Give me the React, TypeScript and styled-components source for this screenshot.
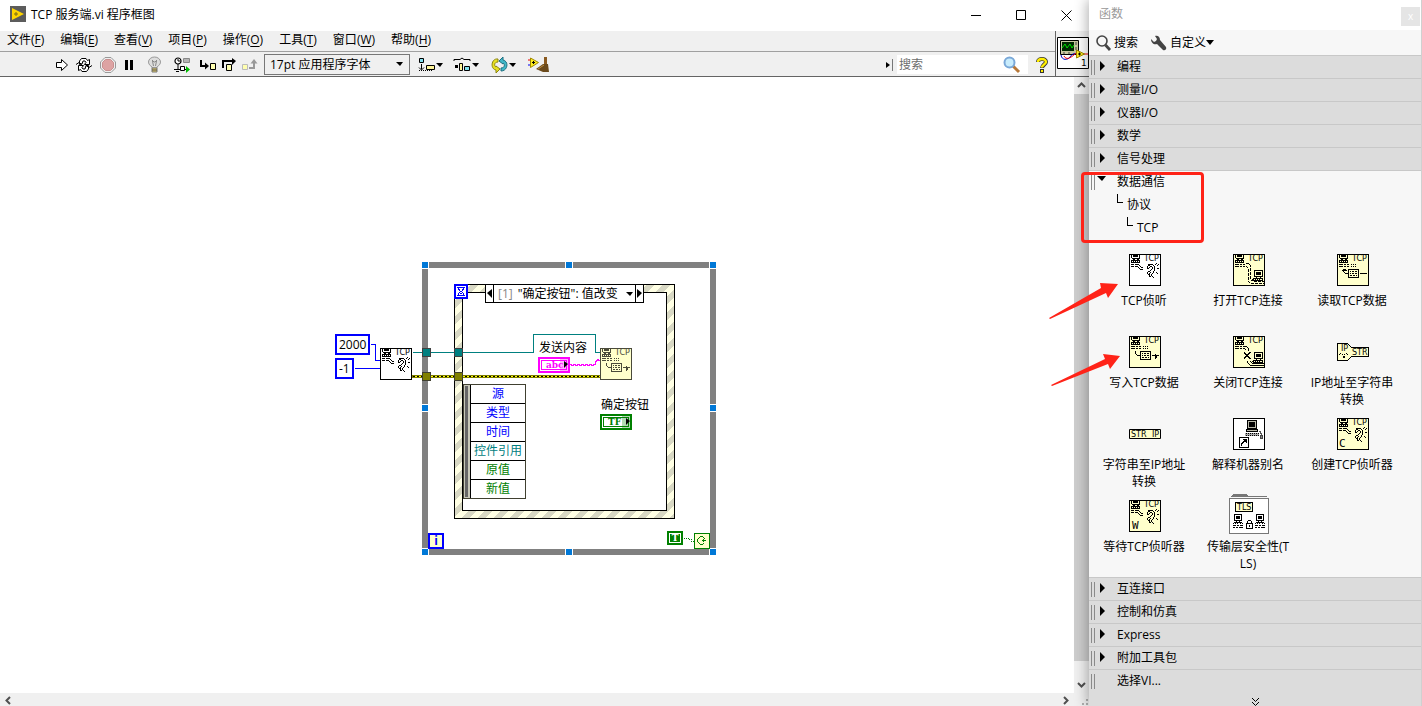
import React from 'react';
import styled, { createGlobalStyle } from 'styled-components';

const FONT = '"Open Sans", "Noto Sans CJK SC", sans-serif';

const GlobalStyle = createGlobalStyle`
  *, *::before, *::after { box-sizing: border-box; }
  body { margin: 0; background: #fff; font: 12px/17px ${FONT}; color: #000; }
  button, input, select { font: inherit; color: inherit; margin: 0; padding: 0; border: 0; background: none; }
  button { cursor: default; }
  svg { display: block; flex: none; overflow: visible; }
`;

/* ---------- pixel drawings ---------- */

function Bitmap({ x = 0, y = 0, rows, fill = '#000' }: { x?: number; y?: number; rows: string[]; fill?: string }) {
  let d = '';
  rows.forEach((row, r) => {
    for (const m of row.matchAll(/#+/g)) {
      d += `M${x + (m.index ?? 0)} ${y + r}h${m[0].length}v1h-${m[0].length}z`;
    }
  });
  return <path d={d} fill={fill} />;
}

function Lines({ d, color = '#000', dash }: { d: string; color?: string; dash?: string }) {
  return <path transform="translate(.5 .5)" d={d} fill="none" stroke={color} strokeDasharray={dash} />;
}

const HOST = ['.#.#####.#', '.#.#####.#', '.#.......#', '..########', '...##..##.', '.#########', '.#.#.#.#.#', '.#########'];
const HOST_LARGE = [
  '..#########', '..#.......#', '..#.#####.#', '..#.#####.#', '..#.#####.#', '..#.......#',
  '..#########', '....#...#..', '.##########', '##.#.#.#..#', '.##########',
];
const CABLE_LEAD = ['####.##.##', '..........', '####.##.##'];
const CABLE = ['###.####....', '........#...', '###.###..#..', '.......#..##', '........#...', '.........###'];
const EAR = [
  '...####...', '..#....#..', '.#..##..#.', '.#.#..#.#.', '.##...#.#.', '.....#..#.', '....#...#.',
  '..##...#..', '.#..#..#..', '.#.#..#...', '..##.#....', '...#.#....', '...##.....',
];
const EAR_WAVES = [
  '.........#..', '.#......#..#', '..#.......#.', '............', '............', '..........##', '............',
  '............', '............', '.........#..', '..........#.', '............', '............', '.....#......', '......#.....',
];
const PACKET = [
  '.###########', '.#.........#', '.#.#.##.##.#', '.#.........#', '.#.#.##.##.#', '.#.........#',
  '.#.##.##.#.#', '.#.........#', '.###########',
];
const CROSS = ['#....##', '##..##.', '.####..', '..##...', '.####..', '##..##.', '#....##'];

type Kind = 'listen' | 'open' | 'read' | 'write' | 'close' | 'create' | 'wait';

function TcpIcon({ kind, bg = '#ffffcc', ink = '#000' }: { kind: Kind; bg?: string; ink?: string }) {
  const ear = kind === 'listen' || kind === 'create' || kind === 'wait';
  return (
    <svg width="32" height="32" viewBox="0 0 32 32" shapeRendering="crispEdges" aria-hidden="true">
      <rect width="32" height="32" fill={ink} />
      <rect x="1" y="1" width="30" height="30" fill={bg} />
      <Bitmap x={1} y={1} rows={HOST} fill={ink} />
      <text x="15" y="7" fontFamily="DejaVu Sans, sans-serif" fontSize="8" fill={ink}>TCP</text>
      {ear && (
        <>
          <Bitmap x={2} y={10} rows={CABLE} fill={ink} />
          <Bitmap x={17} y={10} rows={EAR} fill={ink} />
          <Bitmap x={18} y={9} rows={EAR_WAVES} fill={ink} />
        </>
      )}
      {kind === 'create' && <text x="2" y="29" fontFamily="DejaVu Sans Mono, monospace" fontSize="11">C</text>}
      {kind === 'wait' && <text x="3" y="29" fontFamily="DejaVu Sans Mono, monospace" fontSize="11">W</text>}
      {kind === 'open' && (
        <>
          <Bitmap x={2} y={10} rows={CABLE_LEAD} />
          <Lines d="M12 9h3l2 2v14l3 2h10" dash="3 1" />
          <Lines d="M12 12h1l2 2v13l3 2h12" dash="3 1" />
          <Bitmap x={19} y={16} rows={HOST_LARGE} />
        </>
      )}
      {kind === 'close' && (
        <>
          <Bitmap x={2} y={10} rows={CABLE_LEAD} />
          <Lines d="M11 10h2l2 2v2M11 12l2 2M14 24v2l3 3h13M17 25l2 2h11" />
          <Bitmap x={11} y={16} rows={CROSS} />
          <Bitmap x={19} y={16} rows={HOST_LARGE} />
        </>
      )}
      {kind === 'read' && (
        <>
          <Bitmap x={2} y={10} rows={CABLE_LEAD} />
          <Lines d="M13 10h6M13 12h6" dash="1 1" />
          <Lines d="M6 14v3l2 2h3M4 16h5M5 15h3M22 19h7" />
          <Bitmap x={10} y={15} rows={PACKET} />
        </>
      )}
      {kind === 'write' && (
        <>
          <Bitmap x={2} y={10} rows={CABLE_LEAD} fill={ink} />
          <Lines color={ink} d="M13 10h6M13 12h6" dash="1 1" />
          <Lines color={ink} d="M6 14v3l2 2h3M22 19h7M26 17v5M27 18v3" />
          <Bitmap x={10} y={15} rows={PACKET} fill={ink} />
        </>
      )}
    </svg>
  );
}

const tiny = { fontFamily: 'DejaVu Sans, sans-serif', fontSize: 8 };

const IpToString = () => (
  <svg width="32" height="18" viewBox="0 0 32 18" shapeRendering="crispEdges" aria-hidden="true">
    <path d="M.5.5h10l4 4h17v9h-17l-4 4H.5z" fill="#ffffcc" stroke="#000" />
    <text x="4" y="8" {...tiny}>IP</text>
    <text x="15" y="12" {...tiny}>STR</text>
    <Bitmap x={2} y={10} rows={['.#.....#.', '#..#.#..#', '.........', '....##...', '....##...']} />
  </svg>
);

const StringToIp = () => (
  <svg width="32" height="10" viewBox="0 0 32 10" aria-hidden="true">
    <path d="M.5.5h31v9H.5z" fill="#ffffcc" stroke="#000" />
    <text x="2" y="8" {...tiny}>STR</text>
    <text x="23" y="8" {...tiny}>IP</text>
  </svg>
);

const MachineAlias = () => (
  <svg width="32" height="32" viewBox="0 0 32 32" shapeRendering="crispEdges" aria-hidden="true">
    <path d="M.5.5h31v31H.5z" fill="#fff" stroke="#000" />
    <path d="M14.500 2.500h9v8h-9z" fill="#b8b8a8" stroke="#000" />
    <path d="M16 4h6v5h-6z" />
    <path d="M13.500 11.500h11v2h-11z" fill="#b8b8a8" stroke="#000" />
    <path d="M12 15h14v3H12z" fill="#aaa" />
    <Lines d="M12 15h14M12 17h14" dash="1 1" />
    <Lines color="#555" d="M25 13h2v2h1v3" />
    <path d="M27.500 17.500h2v3h-2z" fill="#888" stroke="#444" />
    <path d="M6.500 19.500h9v10h-9z" fill="#fff" stroke="#000" />
    <Bitmap x={8} y={21} rows={['..####', '...###', '..####', '.##..#', '##....', '#.....', '#.....']} />
  </svg>
);

const TlsFolder = () => (
  <svg width="40" height="44" viewBox="0 0 40 44" shapeRendering="crispEdges" aria-hidden="true">
    <path d="M2 2l2-2h13l2 2h19v1H2z" fill="#777" />
    <path d="M.5 4.500h39v35H.5z" fill="#fff" stroke="#777" />
    <path d="M6.500 8.500h17v9h-17z" fill="#ffffcc" stroke="#000" />
    <text x="8" y="16" {...tiny}>TLS</text>
    {[4, 26].map((x) => (
      <Bitmap key={x} x={x} y={20} rows={['.########.', '.#......#.', '.#.####.#.', '.#.####.#.', '.#.####.#.', '.#......#.', '.########.', '...#..#...', '.########.', '#.#.#..#.#', '..........', '###.##.###', '..........', '##.##.####']} />
    ))}
    <Bitmap x={17} y={26} rows={['..###..', '.#...#.', '.#...#.', '#######', '#.....#', '#..#..#', '#..#..#', '#.....#', '#######']} />
  </svg>
);

const Triangle = ({ dir = 'down', size = 7 }: { dir?: 'down' | 'right' | 'left'; size?: number }) => {
  const h = Math.ceil(size / 2);
  const d = dir === 'down' ? `M0 0h${size + 1}l-${h} ${h + 1}z` : dir === 'right' ? `M0 0v${size + 2}l${h + 1} -${h + 1}z` : `M${h + 1} 0v${size + 2}l-${h + 1} -${h + 1}z`;
  return (
    <svg width={dir === 'down' ? size + 1 : h + 1} height={dir === 'down' ? h + 1 : size + 2} aria-hidden="true">
      <path d={d} />
    </svg>
  );
};

const Chevron = ({ turn }: { turn: number }) => (
  <svg width="9" height="9" viewBox="0 0 9 9" aria-hidden="true">
    <path d="M1 6l3.500-3.500L8 6" transform={`rotate(${turn} 4.500 4.500)`} fill="none" stroke="#505050" strokeWidth="2" />
  </svg>
);

/* ---------- window frame ---------- */

const Desktop = styled.div`
  display: flex;
  min-height: 100vh;
`;

const MainWindow = styled.main`
  flex: 1;
  min-width: 0;
  display: flex;
  flex-direction: column;
  background: #fff;
`;

const TitleBar = styled.header`
  display: flex;
  align-items: flex-start;
  height: 31px;
  padding-left: 10px;
`;

const AppLogo = styled.svg`
  margin-top: 6px;
`;

const Title = styled.h1`
  flex: 1;
  margin: 6px 0 0 5px;
  font-size: 12px;
  line-height: 17px;
  font-weight: 400;
`;

const WindowButton = styled.button`
  width: 45px;
  height: 30px;
  display: grid;
  place-items: center;
`;

const Chrome = styled.div`
  display: flex;
  height: 46px;
  background: #f0f0f0;
  border-bottom: 1px solid #646464;
`;

const Bars = styled.div`
  flex: 1;
  min-width: 0;
`;

const MenuBar = styled.nav`
  display: flex;
  align-items: flex-start;
  gap: 16px;
  height: 21px;
  padding-left: 7px;
  border-bottom: 1px solid #a0a0a0;
`;

const MenuItem = styled.button`
  line-height: 17px;
  white-space: nowrap;
  u { text-underline-offset: 2px; }
`;

const ToolBar = styled.div`
  display: flex;
  align-items: center;
  height: 24px;
  padding: 1px 0 0 56px;
`;

const ToolButton = styled.button<{ $w: number }>`
  width: ${(p) => p.$w}px;
  height: 22px;
  display: flex;
  align-items: center;
  gap: 1px;
`;

const FontPicker = styled.label`
  position: relative;
  width: 146px;
  height: 21px;
  margin-right: 9px;
  select {
    display: block;
    width: 100%;
    height: 100%;
    padding-left: 5px;
    appearance: none;
    border: 1px solid #777;
    border-radius: 0;
  }
  svg {
    position: absolute;
    right: 7px;
    top: 8px;
    pointer-events: none;
  }
`;

const SearchArea = styled.div`
  display: flex;
  align-items: center;
  margin-left: auto;
  padding-right: 6px;
`;

const SearchBox = styled.label`
  display: flex;
  align-items: center;
  width: 131px;
  height: 19px;
  margin: 0 8px 0 4px;
  padding-right: 7px;
  background: #fff;
  input { flex: 1; min-width: 0; height: 19px; padding-left: 2px; outline: 0; }
  input::placeholder { color: #6d6d6d; opacity: 1; }
`;

const ViIconPane = styled.div`
  width: 34px;
  border-left: 1px solid #646464;
  padding: 6px 0 0 1px;
`;

const Workspace = styled.div`
  flex: 1;
  display: flex;
  min-height: 0;
`;

const Canvas = styled.section`
  flex: 1;
  min-width: 0;
  overflow: hidden;
  background: #fff;
`;

const ScrollBar = styled.div<{ $horizontal?: boolean }>`
  display: flex;
  flex-direction: ${(p) => (p.$horizontal ? 'row' : 'column')};
  justify-content: space-between;
  background: #f0f0f0;
  ${(p) => (p.$horizontal ? 'height: 13px; padding: 1px 16px 0 1px;' : 'width: 15px;')}
`;

const ScrollButton = styled.button`
  width: 15px;
  height: 17px;
  display: grid;
  place-items: center;
`;

const ScrollThumb = styled.div`
  flex: 1;
  margin-bottom: 15px;
  background: #cdcdcd;
`;

const BottomBar = styled.div`
  position: relative;
  button { height: 13px; }
`;

const Grip = styled.svg`
  position: absolute;
  right: 0;
  bottom: 0;
`;

/* ---------- block diagram ---------- */

const Diagram = styled.div`
  position: relative;
  width: 390px;
  height: 300px;
  margin: 180px 0 0 330px;
  white-space: nowrap;
`;

const Wiring = styled.svg`
  position: absolute;
  inset: 0;
`;

const Node = styled.div<{ $x: number; $y: number }>`
  position: absolute;
  left: ${(p) => p.$x}px;
  top: ${(p) => p.$y}px;
`;

const NumberConstant = styled(Node)`
  height: 21px;
  padding: 0 2px;
  border: 2px solid #00f;
  background: #fff;
`;

const CaseSelector = styled(Node)`
  display: flex;
  width: 159px;
  height: 19px;
  border: 1px solid #000;
  background: #fff;
  line-height: 17px;
`;

const CaseStep = styled.button`
  width: 8px;
  display: grid;
  place-items: center;
  &:first-child { border-right: 1px solid #000; }
  &:last-child { border-left: 1px solid #000; }
`;

const CaseName = styled.button`
  flex: 1;
  display: flex;
  align-items: center;
  justify-content: space-between;
  padding: 0 2px 0 4px;
  line-height: 17px;
  span { color: #888; margin-right: 2px; }
`;

const EventData = styled(Node)`
  display: flex;
  width: 63px;
  border: 1px solid #404030;
  background: #fff;
`;

const EventHandle = styled.div`
  width: 7px;
  background: #c8c8b8;
  border-left: 1px solid #c8c8b8;
  border-right: 1px solid #000;
  padding: 1px 1px 1px 0;
  &::before { content: ''; display: block; width: 3px; height: 100%; background: #666; }
`;

const EventFields = styled.ul`
  flex: 1;
  margin: 0;
  padding: 0;
  list-style: none;
  text-align: center;
`;

const EventField = styled.li<{ $color: string }>`
  height: 19px;
  line-height: 18px;
  color: ${(p) => p.$color};
  & + & { border-top: 1px solid #000; }
  &:first-child { height: 18px; }
`;

const ControlTerminal = styled(Node)<{ $color: string }>`
  width: 32px;
  height: 16px;
  border: 2px solid ${(p) => p.$color};
  padding: 1px;
  background: #fff;
  color: ${(p) => p.$color};
  font: bold 9px/8px "DejaVu Serif", serif;
  span { display: block; height: 10px; padding-left: 4px; border: 1px solid currentColor; }
  svg { position: absolute; right: 0; top: 2px; z-index: 1; }
  &::after { content: ''; position: absolute; right: 0; top: 0; width: 8px; height: 12px; background: currentColor; opacity: 0.3; }
`;

const IterationTerminal = styled(Node)`
  width: 16px;
  height: 16px;
  border: 2px solid #00f;
  background: #ffffcc;
  color: #00f;
  font-weight: 700;
  line-height: 12px;
  text-align: center;
`;

const TrueConstant = styled(Node)`
  width: 16px;
  height: 14px;
  border: 2px solid #008000;
  padding: 1px;
  color: #fff;
  font: bold 9px/8px "DejaVu Serif", serif;
  text-align: center;
  background: #fff;
  span { display: block; background: #008000; height: 8px; }
`;

const TEAL = '#008080';
const GREEN = '#008000';
const BLUE = '#0000ff';

function BlockDiagram() {
  const handles = [[92, 5], [236, 5], [380, 5], [92, 148], [380, 148], [92, 292], [236, 292], [380, 292]];
  return (
    <Diagram>
      <Wiring width="390" height="300" viewBox="0 0 390 300" shapeRendering="crispEdges" aria-hidden="true">
        <defs>
          <pattern id="hatch" width="16" height="16" patternUnits="userSpaceOnUse">
            <rect width="16" height="16" fill="#ffffe4" />
            <path d="M0 8L8 0h8L0 16z M16 8v8h-8z" fill="#d8d8c4" />
          </pattern>
        </defs>
        <path d="M95 8h288v287H95z" fill="none" stroke="#808080" strokeWidth="6" />
        {handles.map(([x, y]) => (
          <g key={`${x}-${y}`}>
            <rect x={x - 1} y={y - 1} width="8" height="8" fill="#fff" />
            <rect x={x} y={y} width="6" height="6" fill="#0078d7" />
          </g>
        ))}
        <path d="M124.500 27.500h220v234h-220z" fill="url(#hatch)" stroke="#000" />
        <path d="M132.500 35.500h204v218h-204z" fill="#fff" stroke="#000" />
        <Lines color={BLUE} d="M40 87h5v16h5M24 111h26" />
        <Lines color={TEAL} d="M82 95h121v-18h62v18h5" />
        <path d="M82 118h188v3H82z" fill="#808000" />
        <Lines color="#ffff00" d="M82 119h188" />
        <Lines color="#000" d="M82 119h188" dash="2 2" />
        <path d="M92.500 91.500h8v8h-8zM124.500 91.500h8v8h-8z" fill={TEAL} stroke="#404040" />
        <path d="M92.500 115.500h8v8h-8zM124.500 115.500h8v8h-8z" fill="#808000" stroke="#404030" />
        <Lines color="#ff00ff" d="M240 107l2 1 2-1 2 1 2-1 2 1 2-1 2 1 2-1 2 1 2-1 2 1 2-1h1v-3l2-1v-1l2 1h1" />
        <Lines color={GREEN} d="M353 281h6v1h2v2h4" dash="1 1" />
        <path d="M364.500 276.500h15v15h-15z" fill="#ffffcc" stroke={GREEN} />
        <Bitmap x={367} y={279} fill={GREEN} rows={['...###...', '..#...#..', '.#.....#.', '#.....#..', '#....####', '#.....#..', '.#.......', '..#...#..', '...###...']} />
        <path d="M124 27h14v15h-14z" fill={BLUE} />
        <path d="M126 29h10v11h-10z" fill="#fff" />
        <Bitmap x={127} y={30} fill={BLUE} rows={['########', '.#....#.', '.##..##.', '..#..#..', '...##...', '..#..#..', '.#.##.#.', '.#....#.', '########']} />
      </Wiring>

      <NumberConstant $x={5} $y={77}>2000</NumberConstant>
      <NumberConstant $x={5} $y={101}>-1</NumberConstant>
      <Node $x={50} $y={91}><TcpIcon kind="listen" bg="#fff" /></Node>

      <CaseSelector $x={155} $y={27}>
        <CaseStep aria-label="上一个分支"><Triangle dir="left" size={7} /></CaseStep>
        <CaseName><div><span>[1]</span> "确定按钮": 值改变</div><Triangle size={6} /></CaseName>
        <CaseStep aria-label="下一个分支"><Triangle dir="right" size={7} /></CaseStep>
      </CaseSelector>

      <Node $x={209} $y={82}>发送内容</Node>
      <ControlTerminal $x={208} $y={100} $color="#ff00ff"><span>abc</span><Triangle dir="right" size={5} /></ControlTerminal>
      <Node $x={270} $y={91}><TcpIcon kind="write" ink="#4a4a3a" /></Node>
      <Node $x={271} $y={139}>确定按钮</Node>
      <ControlTerminal $x={270} $y={157} $color={GREEN}><span>TF</span><Triangle dir="right" size={5} /></ControlTerminal>

      <EventData $x={133} $y={127}>
        <EventHandle />
        <EventFields>
          <EventField $color={BLUE}>源</EventField>
          <EventField $color={BLUE}>类型</EventField>
          <EventField $color={BLUE}>时间</EventField>
          <EventField $color={TEAL}>控件引用</EventField>
          <EventField $color={GREEN}>原值</EventField>
          <EventField $color={GREEN}>新值</EventField>
        </EventFields>
      </EventData>

      <IterationTerminal $x={98} $y={276}>i</IterationTerminal>
      <TrueConstant $x={337} $y={274}><span>T</span></TrueConstant>
    </Diagram>
  );
}

/* ---------- functions palette ---------- */

const Palette = styled.aside`
  position: relative;
  z-index: 1;
  flex: 0 0 333px;
  display: flex;
  flex-direction: column;
  background: #dcdcdc;
  border-right: 1px solid #d0d0d0;
  box-shadow: -2px 0 12px rgba(0, 0, 0, 0.3);
`;

const PaletteTitle = styled.header`
  display: flex;
  justify-content: space-between;
  height: 30px;
  padding: 5px 1px 0 10px;
  background: #fff;
  color: #999;
`;

const PaletteClose = styled.button`
  width: 19px;
  height: 19px;
  margin-top: 2px;
  background: #e5e5e5;
  color: #fff;
  font-size: 10px;
  line-height: 17px;
`;

const PaletteTools = styled.div`
  display: flex;
  align-items: center;
  gap: 13px;
  height: 25px;
  padding-left: 7px;
  background: #f7f7f7;
`;

const PaletteTool = styled.button`
  display: flex;
  align-items: center;
  gap: 3px;
`;

const CustomizeTool = styled(PaletteTool)`
  gap: 0;
  svg:first-child { margin-right: 3px; }
`;

const Category = styled.button<{ $open?: boolean }>`
  display: flex;
  align-items: center;
  width: 100%;
  height: 23px;
  padding-left: 2px;
  border-top: 1px solid #c8c8c8;
  background: ${(p) => (p.$open ? '#f7f7f7' : '#dcdcdc')};
  text-align: left;
`;

const CategoryGrip = styled.span`
  width: 4px;
  height: 15px;
  border: solid #8a8a8a;
  border-width: 0 1px;
`;

const CategoryMark = styled.span<{ $open?: boolean }>`
  width: 22px;
  height: 15px;
  padding: ${(p) => (p.$open ? '1px 0 0 2px' : '1px 0 0 5px')};
`;

const CategoryName = styled.span`
  height: 19px;
  line-height: 17px;
`;

const OpenCategory = styled.section`
  position: relative;
  background: #f7f7f7;
  padding-bottom: 5px;
`;

const SubLevel = styled.div<{ $depth: number }>`
  display: flex;
  gap: 4px;
  height: 23px;
  padding: 3px 0 0 ${(p) => 18 + p.$depth * 10}px;
  &::before { content: ''; width: 6px; height: 9px; margin-top: -2px; border: solid #000; border-width: 0 0 1px 1px; }
`;

const FunctionGrid = styled.div`
  display: grid;
  grid-template-columns: repeat(3, 104px);
  row-gap: 10px;
  padding: 15px 0 0 4px;
`;

const FunctionItem = styled.button`
  display: flex;
  flex-direction: column;
  align-items: center;
  gap: 6px;
  height: 72px;
`;

const FunctionIcon = styled.span`
  display: flex;
  align-items: center;
  justify-content: center;
  width: 32px;
  height: 32px;
`;

const FunctionLabel = styled.span`
  width: 88px;
  padding-right: 2px;
  line-height: 17px;
  text-align: center;
  word-break: break-all;
`;

const PaletteMore = styled.button`
  flex: 1;
  min-height: 14px;
  display: flex;
  justify-content: center;
  align-items: flex-end;
`;

const Highlight = styled.div`
  position: absolute;
  left: -8px;
  top: 2px;
  width: 123px;
  height: 71px;
  border: 3px solid #ff2318;
  border-radius: 4px;
  pointer-events: none;
`;

const PointerArrow = styled.svg<{ $top: number }>`
  position: absolute;
  left: -41px;
  top: ${(p) => p.$top}px;
  pointer-events: none;
`;

const POINTERS = [
  { top: 112, d: 'M1 36L53 6 52 1 70 2 60 16 58 11 2 37z' },
  { top: 183, d: 'M3 32L57 6 55 1 72 3 62 16 60 11 4 33z' },
];

function CategoryRow({ name, open, leaf }: { name: string; open?: boolean; leaf?: boolean }) {
  return (
    <Category $open={open} aria-expanded={leaf ? undefined : !!open}>
      <CategoryGrip />
      <CategoryMark $open={open}>{!leaf && <Triangle dir={open ? 'down' : 'right'} size={open ? 8 : 8} />}</CategoryMark>
      <CategoryName>{name}</CategoryName>
    </Category>
  );
}

const FUNCTIONS: { name: string; icon: React.ReactNode }[] = [
  { name: 'TCP侦听', icon: <TcpIcon kind="listen" bg="#fff" /> },
  { name: '打开TCP连接', icon: <TcpIcon kind="open" /> },
  { name: '读取TCP数据', icon: <TcpIcon kind="read" /> },
  { name: '写入TCP数据', icon: <TcpIcon kind="write" /> },
  { name: '关闭TCP连接', icon: <TcpIcon kind="close" /> },
  { name: 'IP地址至字符串转换', icon: <IpToString /> },
  { name: '字符串至IP地址转换', icon: <StringToIp /> },
  { name: '解释机器别名', icon: <MachineAlias /> },
  { name: '创建TCP侦听器', icon: <TcpIcon kind="create" /> },
  { name: '等待TCP侦听器', icon: <TcpIcon kind="wait" /> },
  { name: '传输层安全性(TLS)', icon: <TlsFolder /> },
];

function FunctionsPalette() {
  return (
    <Palette>
      <PaletteTitle>
        函数
        <PaletteClose aria-label="关闭">x</PaletteClose>
      </PaletteTitle>
      <PaletteTools>
        <PaletteTool>
          <svg width="15" height="16" viewBox="0 0 15 16" aria-hidden="true">
            <circle cx="6" cy="6" r="5" fill="none" stroke="#444" strokeWidth="1.600" />
            <path d="M9.500 10l4.500 5" stroke="#444" strokeWidth="2.800" />
          </svg>
          搜索
        </PaletteTool>
        <CustomizeTool>
          <svg width="16" height="16" viewBox="0 0 16 16" aria-hidden="true">
            <path d="M4 1C7 0 9 2 9 5l6 7c1 2-1 4-3 3L6 9C3 10 0 8 0 4l3 3 2-1 1-2z" fill="#444" />
          </svg>
          自定义
          <Triangle size={7} />
        </CustomizeTool>
      </PaletteTools>
      {['编程', '测量I/O', '仪器I/O', '数学', '信号处理'].map((n) => <CategoryRow key={n} name={n} />)}
      <OpenCategory>
        <CategoryRow name="数据通信" open />
        <SubLevel $depth={1}>协议</SubLevel>
        <SubLevel $depth={2}>TCP</SubLevel>
        <FunctionGrid>
          {FUNCTIONS.map((f) => (
            <FunctionItem key={f.name}>
              <FunctionIcon>{f.icon}</FunctionIcon>
              <FunctionLabel>{f.name}</FunctionLabel>
            </FunctionItem>
          ))}
        </FunctionGrid>
        <Highlight />
        {POINTERS.map((p) => (
          <PointerArrow key={p.top} $top={p.top} width="74" height="38" viewBox="0 0 74 38" aria-hidden="true">
            <path d={p.d} fill="#ff2318" />
          </PointerArrow>
        ))}
      </OpenCategory>
      {['互连接口', '控制和仿真', 'Express', '附加工具包'].map((n) => <CategoryRow key={n} name={n} />)}
      <CategoryRow name="选择VI..." leaf />
      <PaletteMore aria-label="更多">
        <svg width="9" height="8" viewBox="0 0 9 8" aria-hidden="true">
          <path d="M1 0l3.500 3.500L8 0M1 4l3.500 3.500L8 4" fill="none" stroke="#000" />
        </svg>
      </PaletteMore>
    </Palette>
  );
}

/* ---------- toolbar icons ---------- */

const RunIcon = () => (
  <svg width="12" height="14" viewBox="0 0 12 14"><path d="M.5 4.500h5v-3l6 5.500-6 5.500v-3h-5z" fill="#fff" stroke="#000" /></svg>
);
const RunLoopIcon = () => (
  <svg width="16" height="14" viewBox="0 0 16 14">
    <path d="M3.500 6.500V3l2-2.500H10l1.500 2 2-1v5H8.500l1.500-2-1-1.500H7l-1 3z" fill="#fff" stroke="#000" />
    <path d="M12.500 7.500V11l-2 2.500H6l-1.500-2-2 1v-5h5L6 9.500 7 11h2l1-3.500z" fill="#fff" stroke="#000" />
    <path d="M0 6.500l3-2 3 2M16 7.500l-3 2-3-2" stroke="#000" fill="none" />
  </svg>
);
const AbortIcon = () => (
  <svg width="16" height="16" viewBox="0 0 16 16">
    <path d="M5 .5h6L15.500 5v6L11 15.500H5L.5 11V5z" fill="#eee" stroke="#999" />
    <path d="M5.500 2.500h5l3 3v5l-3 3h-5l-3-3v-5z" fill="#dda3a3" stroke="#c98f8f" />
  </svg>
);
const PauseIcon = () => (
  <svg width="10" height="12" viewBox="0 0 10 12"><path d="M1 1h3v10H1zM6 1h3v10H6z" /></svg>
);
const BulbIcon = () => (
  <svg width="13" height="16" viewBox="0 0 13 16">
    <path d="M4 10C1 8 .5 6 .5 5A6 5 0 0 1 12.500 5c0 1-.5 3-3.500 5v1H4z" fill="#ddd" stroke="#999" />
    <path d="M4.500 4l1 5M8.500 4l-1 5M4 3l2 2h1l2-2" stroke="#888" fill="none" />
    <path d="M4 11h5v4H4z" fill="#e0c860" stroke="#777" />
    <path d="M4 13h5" stroke="#555" />
  </svg>
);
const RetainIcon = () => (
  <svg width="17" height="16" viewBox="0 0 17 16">
    <circle cx="4" cy="4" r="3" fill="#fff" stroke="#000" strokeWidth="1.200" />
    <path d="M4 2v2h2M4 7v5" stroke="#000" fill="none" />
    <path d="M9.500 1.500h6v4h-6z" fill="#b4b4b4" stroke="#888" />
    <path d="M0 12.500h6" stroke="#000" />
    <path d="M6.500 9.500h4v4h-4z" fill="#fff" stroke="#000" />
    <path d="M2 14.500h3M10 12.500h3" stroke="#000" />
    <path d="M12 9l4 3.500-4 3.500z" fill="#0b0" />
  </svg>
);
const StepIntoIcon = () => (
  <svg width="16" height="12" viewBox="0 0 16 12">
    <path d="M1 1v6h6" fill="none" stroke="#000" strokeWidth="2" /><path d="M5 3.500l4 3.500-4 3.500z" />
    <path d="M10.500 4.500h5v6h-5z" fill="#ffffb0" stroke="#000" />
  </svg>
);
const StepOverIcon = () => (
  <svg width="14" height="13" viewBox="0 0 14 13">
    <path d="M1 10V3h10" fill="none" stroke="#000" strokeWidth="2" /><path d="M10 0l4 3-4 4z" />
    <path d="M4.500 6.500h5v6h-5z" fill="#ffffb0" stroke="#000" />
  </svg>
);
const StepOutIcon = () => (
  <svg width="15" height="12" viewBox="0 0 15 12">
    <path d="M.5 5.500h5v5h-5z" fill="#ffffb0" stroke="#bbb" />
    <path d="M7 9h5V4" fill="none" stroke="#999" strokeWidth="2" /><path d="M8.500 4.500L12 0l3.500 4.500z" fill="#999" />
  </svg>
);
const AlignIcon = () => (
  <svg width="16" height="13" viewBox="0 0 16 13">
    <path d="M.5.5h4v4h-4z" fill="#7fe0f0" stroke="#000" />
    <path d="M2.500 6v5M0 9.500l2.500 2.500L5 9.500" fill="none" stroke="#000" /><path d="M0 12.500h14" stroke="#000" strokeDasharray="1 1" />
    <path d="M7.500 7.500h8v4h-8z" fill="#fff59a" stroke="#000" />
  </svg>
);
const DistributeIcon = () => (
  <svg width="17" height="13" viewBox="0 0 17 13">
    <path d="M0 3V1.500h6l2-1.500 2 1.500h6V3" fill="none" stroke="#000" />
    <path d="M1 7h3v3H1z" /><path d="M5.500 5.500h3v7h-3z" fill="#fff59a" stroke="#000" />
    <path d="M10.500 8.500h5v4h-5z" fill="#7fe0f0" stroke="#000" />
  </svg>
);
const ReorderIcon = () => (
  <svg width="17" height="16" viewBox="0 0 17 16">
    <path d="M7 2C0 1-1 12 5 13v3l4-4-4-3v1C3 9 3 5 7 5z" fill="#e8e020" stroke="#8a8410" />
    <path d="M10 14c7 0 8-10 2-11V0L8 4l4 3V6c2 1 2 5-2 5z" fill="#40b8c8" stroke="#1d6f80" />
  </svg>
);
const CleanUpIcon = () => (
  <svg width="22" height="15" viewBox="0 0 22 15">
    <path d="M0 3h3" stroke="#e00" /><path d="M0 8h3" stroke="#00e" />
    <path d="M2.500 1l8 4.500-8 5z" fill="#ffee20" stroke="#a08800" /><path d="M4 5.500h3M5.500 4v3" stroke="#000" />
    <path d="M16 0h3v7h-3z" fill="#8a5a20" /><path d="M8 12l7-5h5l1 8h-6z" fill="#6b4a1c" /><path d="M10 12l6-4" stroke="#c09040" />
  </svg>
);
const ViIcon = () => (
  <svg width="32" height="32" viewBox="0 0 32 32" role="img" aria-label="VI 图标">
    <path d="M.5.5h31v31H.5z" fill="#fff" stroke="#000" />
    <path d="M3.500 3.500h18v14h-18z" fill="#c8c8a0" stroke="#000" />
    <path d="M5 5h12v9H5z" fill="#002800" />
    <path d="M5 11l3-4 2 4 3-4 2 4 2-3" fill="none" stroke="#0d0" />
    <path d="M19 5v3M19 10v3M6 16h2m3 0h2" stroke="#444" />
    <path d="M4 18c1 6 7 5 9 2s4-4 7-3" fill="none" stroke="#00c" /><path d="M7 19c2 4 6 3 12-3M26 17h5" fill="none" stroke="#e00" />
    <path d="M19.500 13l8 4-8 4z" fill="#ffee20" stroke="#a08800" /><path d="M21 17h3M22.500 15.500v3" stroke="#000" />
    <text x="24" y="29" fontSize="9" fontFamily="DejaVu Sans, sans-serif">1</text>
  </svg>
);

const TOOLS: { label: string; w: number; icon: React.ReactNode }[] = [
  { label: '运行', w: 20, icon: <RunIcon /> },
  { label: '连续运行', w: 24, icon: <RunLoopIcon /> },
  { label: '中止执行', w: 24, icon: <AbortIcon /> },
  { label: '暂停', w: 24, icon: <PauseIcon /> },
  { label: '高亮显示执行过程', w: 26, icon: <BulbIcon /> },
  { label: '保存连线值', w: 26, icon: <RetainIcon /> },
  { label: '单步步入', w: 22, icon: <StepIntoIcon /> },
  { label: '单步步过', w: 20, icon: <StepOverIcon /> },
  { label: '单步步出', w: 22, icon: <StepOutIcon /> },
];

const MENUS = [['文件', 'F'], ['编辑', 'E'], ['查看', 'V'], ['项目', 'P'], ['操作', 'O'], ['工具', 'T'], ['窗口', 'W'], ['帮助', 'H']];

export default function App() {
  return (
    <Desktop>
      <GlobalStyle />
      <MainWindow>
        <TitleBar>
          <AppLogo width="16" height="16" viewBox="0 0 16 16" aria-hidden="true">
            <path d="M0 0h16v16H0z" fill="#5c5c5c" />
            <path d="M2 2l12 6-12 6z" fill="#ffd500" />
            <path d="M4 8h4M6 6v4" stroke="#7a6a10" />
          </AppLogo>
          <Title>TCP 服务端.vi 程序框图</Title>
          <WindowButton aria-label="最小化"><svg width="11" height="11"><path d="M0 5.500h10" stroke="#000" /></svg></WindowButton>
          <WindowButton aria-label="最大化"><svg width="11" height="11"><path d="M.5.5h9v9h-9z" fill="none" stroke="#000" /></svg></WindowButton>
          <WindowButton aria-label="关闭"><svg width="11" height="11"><path d="M.5.5l10 10M10.500.5l-10 10" stroke="#000" /></svg></WindowButton>
        </TitleBar>
        <Chrome>
          <Bars>
            <MenuBar>
              {MENUS.map(([name, key]) => <MenuItem key={key}>{name}(<u>{key}</u>)</MenuItem>)}
            </MenuBar>
            <ToolBar>
              {TOOLS.map((t) => <ToolButton key={t.label} $w={t.w} aria-label={t.label}>{t.icon}</ToolButton>)}
              <FontPicker>
                <select aria-label="字体"><option>17pt 应用程序字体</option></select>
                <Triangle size={6} />
              </FontPicker>
              <ToolButton $w={35} aria-label="对齐对象"><AlignIcon /><Triangle size={6} /></ToolButton>
              <ToolButton $w={37} aria-label="分布对象"><DistributeIcon /><Triangle size={6} /></ToolButton>
              <ToolButton $w={37} aria-label="重新排序"><ReorderIcon /><Triangle size={6} /></ToolButton>
              <ToolButton $w={24} aria-label="整理程序框图"><CleanUpIcon /></ToolButton>
              <SearchArea>
                <svg width="7" height="12" viewBox="0 0 7 12" aria-hidden="true"><path d="M0 3l4 3-4 3z" /><path d="M6.500 0v12" stroke="#777" /></svg>
                <SearchBox>
                  <input type="text" placeholder="搜索" aria-label="搜索" />
                  <svg width="18" height="18" viewBox="0 0 18 18" aria-hidden="true">
                    <path d="M10 10l6 6" stroke="#b87838" strokeWidth="3" />
                    <circle cx="6.500" cy="6.500" r="5" fill="#c8ecfc" stroke="#7aa8d8" strokeWidth="2" />
                  </svg>
                </SearchBox>
                <ToolButton $w={13} aria-label="帮助">
                  <svg width="12" height="16" viewBox="0 0 12 16">
                    <path d="M2 5C2 1 10 1 10 5c0 2-4 3-4 6" fill="none" stroke="#333" strokeWidth="4" />
                    <path d="M4 12h4v4H4z" fill="#333" />
                    <path d="M2 5C2 1 10 1 10 5c0 2-4 3-4 5.500" fill="none" stroke="#ffee00" strokeWidth="2.400" />
                    <path d="M5 13h2v2H5z" fill="#ffee00" />
                  </svg>
                </ToolButton>
              </SearchArea>
            </ToolBar>
          </Bars>
          <ViIconPane><ViIcon /></ViIconPane>
        </Chrome>
        <Workspace>
          <Canvas aria-label="程序框图"><BlockDiagram /></Canvas>
          <ScrollBar>
            <ScrollButton aria-label="向上滚动"><Chevron turn={0} /></ScrollButton>
            <ScrollThumb />
            <ScrollButton aria-label="向下滚动"><Chevron turn={180} /></ScrollButton>
          </ScrollBar>
        </Workspace>
        <BottomBar>
          <ScrollBar $horizontal>
            <ScrollButton aria-label="向左滚动"><Chevron turn={270} /></ScrollButton>
            <ScrollButton aria-label="向右滚动"><Chevron turn={90} /></ScrollButton>
          </ScrollBar>
          <Grip width="8" height="8" viewBox="0 0 8 8" aria-hidden="true">
            <path d="M5 1h2v2H5zM1 5h2v2H1zM5 5h2v2H5z" fill="#b0b0b0" />
          </Grip>
        </BottomBar>
      </MainWindow>
      <FunctionsPalette />
    </Desktop>
  );
}
